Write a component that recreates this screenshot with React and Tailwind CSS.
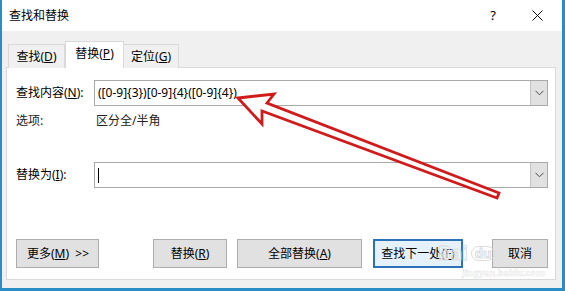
import React from "react";

const Chevron = () => (
  <svg width="9" height="6" viewBox="0 0 9 6" fill="none">
    <path d="M0.5 0.8 L4.5 4.8 L8.5 0.8" stroke="#4a4a4a" strokeWidth="1" />
  </svg>
);

const Combo = ({ children }) => (
  <div className="flex h-[26px] flex-1 items-stretch border border-[#a9a9a9] bg-white">
    <div className="flex flex-1 items-center pl-[3px]">{children}</div>
    <div className="flex w-[17px] items-center justify-center border-l border-[#c4c4c4] bg-[#e1e1e1]">
      <Chevron />
    </div>
  </div>
);

const Btn = ({ className, children, primary }) => (
  <div
    className={
      "flex h-[29px] items-center justify-center " +
      (primary
        ? "border-2 border-[#2b72b8] bg-[#e5f1fb] "
        : "border border-[#adadad] bg-[#e1e1e1] ") +
      className
    }
  >
    {children}
  </div>
);

const App = () => {
  return (
    <div className="relative h-[291px] w-[565px] overflow-hidden text-[12px] leading-none text-black font-['Noto_Sans','Noto_Sans_CJK_SC',sans-serif]">
      <div className="flex h-full flex-col border-b-[3px] border-l-2 border-r-[3px] border-[#2a8dc5] bg-[#f0f0f0]">
        {/* title bar */}
        <div className="flex h-[31px] shrink-0 items-center bg-white pl-[7px]">
          <span className="text-[12px]">查找和替换</span>
          <span className="ml-auto mr-[36px] text-[13px]">?</span>
          <svg width="11" height="11" viewBox="0 0 11 11" className="mr-[19px]">
            <path d="M0.5 0.5 L10.5 10.5 M10.5 0.5 L0.5 10.5" stroke="#111" strokeWidth="1" />
          </svg>
        </div>

        <div className="flex flex-col pl-[4px] pr-[6px] pt-[10px]">
          {/* tabs */}
          <div className="relative z-10 -mb-px flex h-[27px] items-end pl-[2px]">
            <div className="flex h-[24px] w-[57px] items-center justify-center border border-b-0 border-[#d9d9d9] bg-[#f0f0f0]">
              查找(<u>D</u>)
            </div>
            <div className="flex h-[27px] w-[59px] items-center justify-center border border-b-0 border-[#d9d9d9] bg-white pb-[2px]">
              替换(<u>P</u>)
            </div>
            <div className="flex h-[24px] w-[55px] items-center justify-center border border-b-0 border-l-0 border-[#d9d9d9] bg-[#f0f0f0]">
              定位(<u>G</u>)
            </div>
          </div>

          {/* panel */}
          <div className="flex h-[213px] flex-col border border-[#d9d9d9] bg-white pl-[9px] pr-[7px] pt-[12px]">
            <div className="flex items-center">
              <div className="w-[78px]">
                查找内容(<u>N</u>):
              </div>
              <Combo>
                <span className="text-[12px]">([0-9]{"{3}"})[0-9]{"{4}"}([0-9]{"{4}"})</span>
              </Combo>
            </div>

            <div className="mt-[8px] flex h-[14px] items-center text-[#222]">
              <div className="w-[80px]">选项:</div>
              <div>区分全/半角</div>
            </div>

            <div className="mt-[34px] flex items-center">
              <div className="w-[78px]">
                替换为(<u>I</u>):
              </div>
              <Combo>
                <div className="h-[15px] w-px bg-black" />
              </Combo>
            </div>

            <div className="mt-[51px] flex items-center">
              <Btn className="w-[83px] justify-start pl-[10px]">
                更多(<u>M</u>)&nbsp;&nbsp;&gt;&gt;
              </Btn>
              <Btn className="ml-[54px] w-[74px]">
                替换(<u>R</u>)
              </Btn>
              <Btn className="ml-[10px] w-[125px]">
                全部替换(<u>A</u>)
              </Btn>
              <Btn primary className="ml-[11px] w-[90px]">
                查找下一处(<u>F</u>)
              </Btn>
              <Btn className="ml-[29px] w-[56px]">取消</Btn>
            </div>
          </div>
        </div>
      </div>

      {/* faint baidu watermark */}
      <div className="pointer-events-none absolute left-[438px] top-[244px] flex items-center gap-[3px] text-[19px] font-bold text-white/40 [-webkit-text-stroke:1px_#dcdcdc]">
        <span>Bai</span>
        <span className="rounded-full border border-[#dcdcdc] px-[3px] text-[13px]">du</span>
      </div>
      <div className="pointer-events-none absolute left-[462px] top-[268px] text-[9px] font-bold text-white/70 [-webkit-text-stroke:0.4px_#dedede]">
        jingyan.baidu.com
      </div>

      {/* red arrow annotation */}
      <svg className="pointer-events-none absolute left-0 top-0" width="565" height="291" viewBox="0 0 565 291">
        <polygon
          points="238,98 274,94 267,103 499,193 497,198 262,111 262,124"
          fill="white"
          stroke="#d11a1a"
          strokeWidth="2.8"
          strokeLinejoin="miter"
        />
      </svg>
    </div>
  );
};

export default App;
